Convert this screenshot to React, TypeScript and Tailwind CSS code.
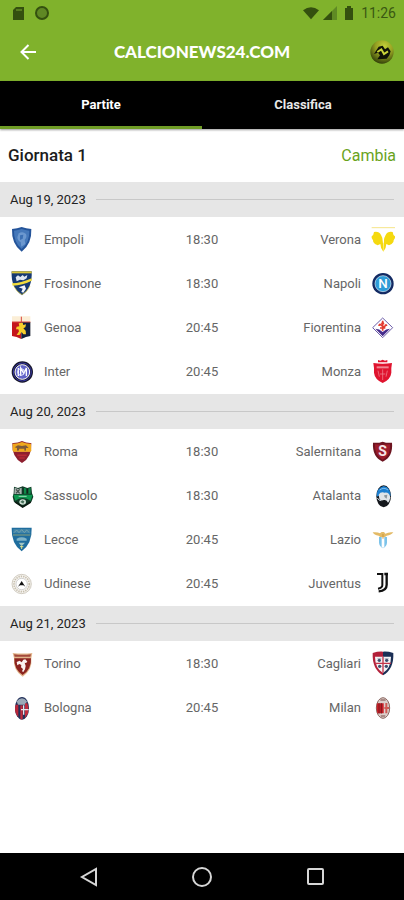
import React from 'react';

type Match = { home: string; away: string; time: string };
type Day = { date: string; matches: Match[] };

const days: Day[] = [
  {
    date: 'Aug 19, 2023',
    matches: [
      { home: 'Empoli', away: 'Verona', time: '18:30' },
      { home: 'Frosinone', away: 'Napoli', time: '18:30' },
      { home: 'Genoa', away: 'Fiorentina', time: '20:45' },
      { home: 'Inter', away: 'Monza', time: '20:45' },
    ],
  },
  {
    date: 'Aug 20, 2023',
    matches: [
      { home: 'Roma', away: 'Salernitana', time: '18:30' },
      { home: 'Sassuolo', away: 'Atalanta', time: '18:30' },
      { home: 'Lecce', away: 'Lazio', time: '20:45' },
      { home: 'Udinese', away: 'Juventus', time: '20:45' },
    ],
  },
  {
    date: 'Aug 21, 2023',
    matches: [
      { home: 'Torino', away: 'Cagliari', time: '18:30' },
      { home: 'Bologna', away: 'Milan', time: '20:45' },
    ],
  },
];

// Club crests, all drawn on the same 72x84 canvas
const crests: Record<string, React.ReactNode> = {
  Empoli: (
    <>
      <path d="M6 9Q22 8 35 3Q48 8 64 9Q66 54 35 77Q4 54 6 9Z" fill="#24549a" />
      <path d="M12 14Q24 13 35 9Q46 13 58 14Q59 49 35 69Q11 49 12 14Z" fill="#4578ba" />
      <path d="M26 22Q38 14 48 24Q52 34 44 42L46 54L34 62L32 48Q22 44 22 34Z" fill="#6c98cf" />
      <path d="M30 28L40 26L38 38L30 42Z" fill="#3c70b4" />
    </>
  ),
  Frosinone: (
    <>
      <path d="M5 4H65Q68 54 36 76Q2 54 5 4Z" fill="#173a73" />
      <path d="M5 4H65V10H5Z" fill="#d8c53a" />
      <path d="M6 40Q32 40 65 25V32Q38 46 8 47Z" fill="#f1dc3c" />
      <path d="M17 22L24 16L31 21L38 15L43 20L52 15L50 25L40 31L30 29L20 34Z" fill="#dfe7f2" />
      <path d="M26 52L44 46L48 56L40 68L34 66L38 56Z" fill="#f2f5fa" />
      <path d="M12 50Q20 66 36 74Q54 64 60 48" fill="none" stroke="#d8c53a" strokeWidth="2" />
    </>
  ),
  Genoa: (
    <>
      <path d="M6 7H61V66Q48 67 34 75Q20 67 6 66Z" fill="#fbeed6" />
      <path d="M6 24H34V75Q20 67 6 66Z" fill="#c4161c" />
      <path d="M34 24H61V66Q48 67 34 75Z" fill="#10203f" />
      <path d="M34 8V24M6 24H61" stroke="#d8453c" strokeWidth="3" />
      <path d="M26 28L38 26L40 33L48 31L46 40L40 43L47 50L48 61H40L35 54L28 63H20L27 52L25 46L18 46L20 38L28 37Z" fill="#f6cf2c" />
    </>
  ),
  Inter: (
    <>
      <circle cx="37" cy="42" r="32" fill="#17172b" />
      <circle cx="37" cy="42" r="27" fill="none" stroke="#3838a8" strokeWidth="3" />
      <circle cx="37" cy="42" r="22" fill="#6264c8" />
      <circle cx="37" cy="42" r="22" fill="none" stroke="#fff" strokeWidth="3" />
      <path d="M25 30V54M32 54V30L41 46L49 30V54" fill="none" stroke="#fff" strokeWidth="4" />
      <circle cx="33" cy="42" r="10" fill="none" stroke="#e6e8ff" strokeWidth="3" />
    </>
  ),
  Verona: (
    <>
      <path d="M5 5H75" stroke="#f0d84c" strokeWidth="2" />
      <path d="M12 18Q27 15 33 27Q39 36 39 48L40 77Q31 66 31 54L23 58L15 54Q8 50 9 43Q3 38 5 31Q11 28 12 18Z" fill="#f5d90f" />
      <path d="M68 18Q53 15 47 27Q41 36 41 48L40 77Q49 66 49 54L57 58L65 54Q72 50 71 43Q77 38 75 31Q69 28 68 18Z" fill="#f5d90f" />
      <path d="M40 26V50" stroke="#fff" strokeWidth="3" />
    </>
  ),
  Napoli: (
    <>
      <circle cx="39" cy="41" r="32" fill="#122a63" />
      <circle cx="39" cy="41" r="24" fill="#2f9cd8" stroke="#dff2fb" strokeWidth="2" />
      <text x="39" y="55" textAnchor="middle" fontSize="40" fontWeight="500" fill="#fff">N</text>
    </>
  ),
  Fiorentina: (
    <>
      <path d="M38 12L68 41L38 71L8 41Z" fill="#fff" stroke="#6b5ba8" strokeWidth="3" />
      <path d="M16 44Q28 44 38 54Q48 44 60 44L38 67Z" fill="#472d8c" />
      <path d="M38 20V50M27 36Q28 28 33 33L43 40Q48 28 50 36M30 42H46" fill="none" stroke="#e23a30" strokeWidth="5" />
      <path d="M38 20L32 31H44Z" fill="#e23a30" />
    </>
  ),
  Monza: (
    <>
      <path d="M24 6L31 8L38 5L45 8L52 6V13H24Z" fill="#e0142f" />
      <path d="M10 15Q38 20 66 15Q63 30 64 44Q62 64 38 75Q14 64 12 44Q13 30 10 15Z" fill="#e0142f" />
      <path d="M20 28H56" stroke="#f08592" strokeWidth="6" />
      <path d="M38 34V66M30 48H46M24 38L28 56M52 38L48 56" stroke="#f08f9b" strokeWidth="2" />
    </>
  ),
  Roma: (
    <>
      <path d="M7 15Q22 16 36 9Q50 16 64 15Q66 58 36 75Q5 58 7 15Z" fill="#8e1f2f" />
      <path d="M8 17Q22 18 36 12Q50 18 63 17L64 39H8Z" fill="#f0a81c" />
      <path d="M14 28L24 22L36 24L48 22L56 30L48 30V38H43V32H28L26 38H21V30Z" fill="#7d5a3a" />
      <path d="M10 40H62" stroke="#f4b52e" strokeWidth="3" />
      <path d="M22 52H50M28 60H44" stroke="#b82a36" strokeWidth="5" />
    </>
  ),
  Sassuolo: (
    <>
      <path d="M12 14L24 18L38 13L52 18L64 14L66 34L70 44L64 60Q54 66 38 76Q22 66 12 60L8 44L11 34Z" fill="#113b27" />
      <path d="M14 17L25 21L35 17V36H13Z" fill="#aab3b0" />
      <path d="M18 22L29 34M29 22L18 34" stroke="#41504a" strokeWidth="4" />
      <path d="M42 17L52 21L62 17V35H42Z" fill="#0f8a4a" />
      <path d="M52 20V35" stroke="#10261b" strokeWidth="6" />
      <path d="M10 38H68L62 56Q50 48 38 48Q26 48 16 56Z" fill="#0e9850" />
      <path d="M26 43H50" stroke="#9bdcb8" strokeWidth="3" />
      <ellipse cx="38" cy="60" rx="10" ry="8" fill="#cfe0d5" />
      <path d="M31 60L37 55L43 58L40 65Z" fill="#47705a" />
      <path d="M16 60Q28 68 38 75Q50 68 62 60" fill="none" stroke="#0b1a12" strokeWidth="5" />
    </>
  ),
  Lecce: (
    <>
      <path d="M5 5H65Q67 52 35 76Q3 52 5 5Z" fill="#1f6d9e" />
      <path d="M10 9H60L61 22H9Z" fill="#3f83a8" />
      <path d="M12 20L20 12L27 20L35 11L43 20L50 12L58 20" fill="none" stroke="#74a3ae" strokeWidth="3" />
      <path d="M9 27H61" stroke="#c2bd6a" strokeWidth="2" />
      <path d="M20 38Q35 30 50 38V44H20Z" fill="#7fb3c8" />
      <path d="M26 50H45L38 58H32Z" fill="#9fc4c4" />
      <path d="M35 58V69M30 62H40" stroke="#dce08c" strokeWidth="3" />
    </>
  ),
  Udinese: (
    <>
      <circle cx="35" cy="42" r="29" fill="#f5f3ef" stroke="#bdb5a6" strokeWidth="2" />
      <circle cx="35" cy="42" r="23" fill="none" stroke="#c7bfae" strokeWidth="5" strokeDasharray="4 3" />
      <circle cx="35" cy="42" r="17" fill="#fff" stroke="#bcbcbc" strokeWidth="2" />
      <path d="M24 50L35 33L46 50L40 46H30Z" fill="#111" />
    </>
  ),
  Salernitana: (
    <>
      <path d="M9 14Q24 16 38 11Q52 16 66 14Q70 56 38 71Q6 56 9 14Z" fill="#6d1420" />
      <path d="M15 19Q38 21 60 19Q63 52 38 65Q13 52 15 19Z" fill="#9c1c2b" />
      <text x="38" y="55" textAnchor="middle" fontSize="42" fontWeight="700" fill="#f4e6e8">S</text>
    </>
  ),
  Atalanta: (
    <>
      <ellipse cx="41" cy="43" rx="22" ry="33" fill="#14171c" />
      <path d="M20 44Q19 18 41 12Q62 16 62 42L46 34Z" fill="#1c7fd0" />
      <path d="M29 24Q42 14 54 24" fill="none" stroke="#7dbcec" strokeWidth="3" />
      <path d="M26 38Q32 28 44 32Q58 30 61 46Q59 58 54 62Q50 52 42 54Q32 58 28 50Z" fill="#dfe4e8" />
      <path d="M42 40L52 38L50 50L44 46Z" fill="#8e989e" />
      <path d="M22 48Q26 56 34 56" fill="none" stroke="#c8d4dc" strokeWidth="3" />
    </>
  ),
  Lazio: (
    <>
      <path d="M8 19Q22 17 30 22L35 18H42L46 23Q56 17 70 19Q64 28 50 29L44 34H32L26 29Q12 28 8 19Z" fill="#e3ba66" />
      <path d="M27 33H51V50Q50 61 39 67Q28 61 27 50Z" fill="#7cc3ea" />
      <path d="M35 33H43V63L39 66L35 63Z" fill="#fff" />
      <path d="M39 24V38" stroke="#c9983d" strokeWidth="3" />
    </>
  ),
  Juventus: (
    <>
      <path d="M21 12H37V46Q37 54 24 56" fill="none" stroke="#111" strokeWidth="6" />
      <path d="M43 12H54M50 9V44Q50 62 26 64" fill="none" stroke="#111" strokeWidth="7" />
    </>
  ),
  Torino: (
    <>
      <path d="M8 9Q38 12 67 9L64 24Q68 60 38 80Q8 60 12 24Z" fill="#e2b68c" />
      <path d="M13 25H63Q65 58 38 75Q11 58 13 25Z" fill="#8c2420" />
      <path d="M12 13Q38 16 63 13L61 20H14Z" fill="#a34a3c" />
      <path d="M20 36L29 32L35 37L40 29L46 28L52 35L48 39L44 38L47 48L45 58L40 66L36 64L39 57L33 52L34 45L28 42L22 46Z" fill="#fbf4f2" />
    </>
  ),
  Bologna: (
    <>
      <ellipse cx="36" cy="43" rx="21" ry="34" fill="#22305a" />
      <path d="M20 22Q36 4 51 22L46 32H24Z" fill="#9ba9b8" />
      <path d="M17 32H25V70Q14 58 15 42Z" fill="#b8273a" />
      <path d="M31 34H38V76H31Z" fill="#c22c3e" />
      <path d="M45 28H52Q58 44 54 58L45 72Z" fill="#c22c3e" />
      <path d="M41 34V62M33 47H56" stroke="#e9e4ea" strokeWidth="4" />
    </>
  ),
  Cagliari: (
    <>
      <path d="M8 9Q24 4 39 5V76Q6 58 8 9Z" fill="#b3203a" />
      <path d="M39 5Q54 4 70 9Q72 58 39 76Z" fill="#1b2f55" />
      <path d="M15 20H63Q63 54 39 69Q15 54 15 20Z" fill="#f4f4f6" />
      <path d="M39 20V68M15 40H63" stroke="#c3344a" strokeWidth="4" />
      <circle cx="28" cy="31" r="5" fill="#3d4c6c" />
      <circle cx="50" cy="31" r="5" fill="#3d4c6c" />
      <circle cx="29" cy="49" r="5" fill="#3d4c6c" />
      <circle cx="49" cy="49" r="5" fill="#3d4c6c" />
      <path d="M22 26H34M44 26H56" stroke="#8f99ae" strokeWidth="2" />
    </>
  ),
  Milan: (
    <>
      <ellipse cx="39" cy="42" rx="20" ry="31" fill="#dccfcb" stroke="#8a6660" strokeWidth="3" />
      <path d="M21 28H41V58H22Q18 44 21 28Z" fill="#c81f27" />
      <path d="M27 27V59M34 27V59" stroke="#5a1418" strokeWidth="2" />
      <path d="M49 27V58M43 42H57" stroke="#d05a54" strokeWidth="6" />
      <path d="M31 18H47M32 66H46" stroke="#9a7772" strokeWidth="4" />
    </>
  ),
};

const Crest: React.FC<{ team: string }> = ({ team }) => (
  <svg viewBox="0 0 72 84" className="h-7 w-6 shrink-0 overflow-visible" aria-hidden="true">
    {crests[team]}
  </svg>
);

const StatusBar: React.FC = () => (
  <div className="flex h-6 items-center justify-between pl-3 pr-2 pt-px text-[#3a5812]">
    <div className="flex items-center gap-[11px]">
      <svg viewBox="0 0 12 14" className="h-3.5 w-3" aria-hidden="true">
        <path d="M4 1H12V14H1V4Z" fill="#34500f" />
        <path d="M5 3V5M7 3V5M9 3V5" stroke="#7ba832" />
      </svg>
      <svg viewBox="0 0 14 14" className="size-3.5" aria-hidden="true">
        <circle cx="7" cy="7" r="6" fill="#5f8824" stroke="#34500f" strokeWidth="2" />
      </svg>
    </div>
    <div className="flex items-center">
      <svg viewBox="0 0 18 14" className="mr-1 h-3.5 w-4" aria-hidden="true">
        <path d="M0 4Q9 -3 18 4L9 14Z" fill="#34500f" />
      </svg>
      <svg viewBox="0 0 14 14" className="mr-2 size-3.5" aria-hidden="true">
        <path d="M0 14L14 0V14Z" fill="#5f8a24" />
        <path d="M0 14L9 5V14Z" fill="#34500f" />
      </svg>
      <svg viewBox="0 0 8 14" className="mr-2 h-3.5 w-2" aria-hidden="true">
        <path d="M2 0H6V2H8V14H0V2H2Z" fill="#34500f" />
      </svg>
      <span className="text-sm leading-5">11:26</span>
    </div>
  </div>
);

const Header: React.FC = () => (
  <header className="bg-[#80b22c]">
    <StatusBar />
    <div className="grid h-[57px] grid-cols-[1fr_auto_1fr] items-center px-2.5 pb-0.5">
      <button type="button" aria-label="Indietro" className="flex h-6 w-9 items-center justify-center text-white">
        <svg viewBox="0 0 16 16" className="size-4" fill="none" stroke="currentColor" strokeWidth="2" aria-hidden="true">
          <path d="M16 8H2M8.500 1L1.500 8L8.500 15" />
        </svg>
      </button>
      <h1 className="font-['Lato',sans-serif] text-[17px] leading-6 font-black text-white">CALCIONEWS24.COM</h1>
      <svg viewBox="0 0 72 72" className="size-6 justify-self-end" aria-hidden="true">
        <defs>
          <radialGradient id="ball" cx="0.600" cy="0.250" r="0.750">
            <stop offset="0" stopColor="#c3cf38" />
            <stop offset="0.500" stopColor="#94a022" />
            <stop offset="1" stopColor="#37450a" />
          </radialGradient>
        </defs>
        <circle cx="36" cy="36" r="35" fill="url(#ball)" />
        <path d="M12 42L26 20L38 17L45 28L54 22L62 34L58 46L50 56L22 58L30 46L24 38Z" fill="#0f1207" />
        <path d="M22 36L34 28L42 42L54 34" fill="none" stroke="#c9d33a" strokeWidth="6" />
      </svg>
    </div>
  </header>
);

const Tabs: React.FC = () => (
  <nav className="grid h-12 grid-cols-2 bg-black text-[13px] font-bold text-white shadow-[0_1px_2px_#00000066]">
    <button type="button" className="border-b-3 border-[#6f9c25] pt-[3px]">Partite</button>
    <button type="button" className="border-b-3 border-black pt-[3px] text-[#e8e8e8]">Classifica</button>
  </nav>
);

const MatchRow: React.FC<{ match: Match }> = ({ match }) => (
  <li className="grid h-11 grid-cols-[1fr_auto_1fr] items-center px-2.5 text-[13px] text-[#666]">
    <div className="flex items-center gap-2.5">
      <Crest team={match.home} />
      <span>{match.home}</span>
    </div>
    <time>{match.time}</time>
    <div className="flex items-center justify-end gap-[9px]">
      <span>{match.away}</span>
      <Crest team={match.away} />
    </div>
  </li>
);

const App: React.FC = () => {
  return (
    <div className="flex min-h-screen flex-col bg-white font-['Roboto',sans-serif]">
      <Header />
      <Tabs />
      <main className="flex-1">
        <div className="flex h-[53px] items-center justify-between px-2">
          <h2 className="text-[17px] font-medium text-[#1c1c1c]">Giornata 1</h2>
          <button type="button" className="text-base text-[#69a31c]">Cambia</button>
        </div>
        {days.map((day) => (
          <section key={day.date}>
            <div className="flex h-[35px] items-center gap-2.5 bg-[#e6e6e6] px-2.5">
              <h3 className="text-[13px] text-[#222]">{day.date}</h3>
              <div className="h-px flex-1 bg-[#c8c8c8]" />
            </div>
            <ul className="pt-px">
              {day.matches.map((match) => (
                <MatchRow key={match.home} match={match} />
              ))}
            </ul>
          </section>
        ))}
      </main>
      <footer className="grid h-[47px] grid-cols-[1fr_auto_1fr] items-center gap-[93px] bg-black text-[#d6d6d6]">
        <button type="button" aria-label="Back" className="justify-self-end">
          <svg viewBox="0 0 20 20" className="size-5" fill="none" stroke="currentColor" strokeWidth="2" aria-hidden="true">
            <path d="M17 2V18L3 10Z" />
          </svg>
        </button>
        <button type="button" aria-label="Home">
          <svg viewBox="0 0 20 20" className="size-5" fill="none" stroke="currentColor" strokeWidth="2" aria-hidden="true">
            <circle cx="10" cy="10" r="9" />
          </svg>
        </button>
        <button type="button" aria-label="Recents" className="justify-self-start">
          <svg viewBox="0 0 20 20" className="size-5" fill="none" stroke="currentColor" strokeWidth="2" aria-hidden="true">
            <rect x="3" y="2" width="15" height="15" rx="1" />
          </svg>
        </button>
      </footer>
    </div>
  );
};

export default App;
